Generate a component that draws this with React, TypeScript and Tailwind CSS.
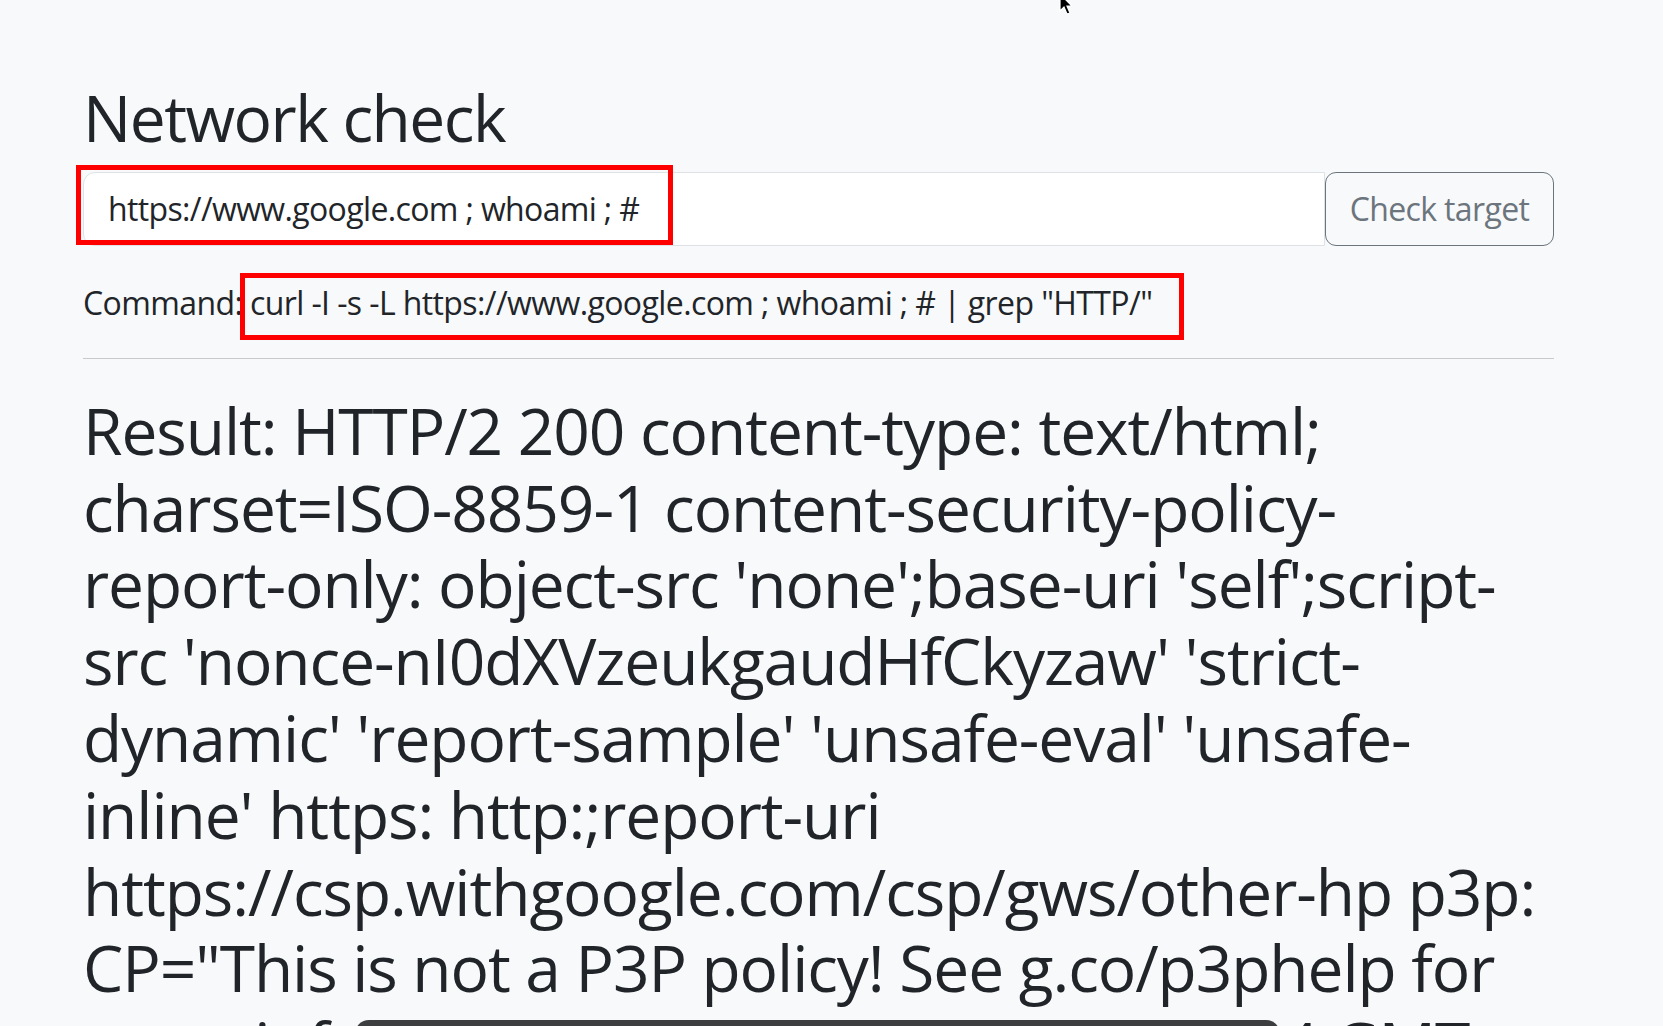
import React from "react";

const resultLines = [
  "Result: HTTP/2 200 content-type: text/html;",
  "charset=ISO-8859-1 content-security-policy-",
  "report-only: object-src 'none';base-uri 'self';script-",
  "src 'nonce-nI0dXVzeukgaudHfCkyzaw' 'strict-",
  "dynamic' 'report-sample' 'unsafe-eval' 'unsafe-",
  "inline' https: http:;report-uri",
  "https://csp.withgoogle.com/csp/gws/other-hp p3p:",
  'CP="This is not a P3P policy! See g.co/p3phelp for',
  'more info." date: Tue, 18 Jun 2024 09:12:44 GMT',
];

export default function App() {
  return (
    <div className="relative h-[1026px] w-full overflow-hidden bg-[#f8f9fa] font-['Open_Sans','Noto_Sans',sans-serif] text-[#212529]">
      <main className="ml-[83px] w-[1471px] pt-[80px]">
        <h1 className="text-[64px] leading-[76.8px] font-normal tracking-[-1.5px]">Network check</h1>

        <div className="relative mt-[15px] flex h-[74px]">
          <input
            readOnly
            value="https://www.google.com ; whoami ; #"
            className="min-w-0 flex-1 rounded-l-[12px] border border-[#dee2e6] bg-white px-[24px] text-[32px] tracking-[-0.64px] text-[#212529] outline-none"
          />
          <button className="w-[229px] rounded-[11px] border border-[#6c757d] text-[32px] tracking-[-0.64px] text-[#6c757d]">
            Check target
          </button>
          <span className="pointer-events-none absolute left-[-7px] top-[-7px] h-[80px] w-[597px] border-[5px] border-[#ff0000]" />
        </div>

        <p className="mt-[33px] text-[32px] leading-[48px] tracking-[-0.6px]">
          Command:{" "}
          <span className="relative">
            curl -I -s -L https://www.google.com ; whoami ; # | grep "HTTP/"
            <span className="pointer-events-none absolute left-[-10px] top-[-8px] h-[67px] w-[944px] border-[5px] border-[#ff0000]" />
          </span>
        </p>

        <hr className="mt-[31px] border-0 border-t border-[#c9cacb]" />

        <div className="mt-[34px] text-[64px] leading-[76.8px] tracking-[-1.05px]">
          {resultLines.map((line) => (
            <div key={line} className="whitespace-nowrap">
              {line}
            </div>
          ))}
        </div>
      </main>

      <div className="absolute left-[355px] top-[1020px] h-[40px] w-[925px] rounded-t-[14px] bg-[#3d3e40]" />

      <svg className="absolute left-[1059px] top-[-7px]" width="16" height="24" viewBox="0 0 16 24">
        <path d="M1 1 L1 18 L5 14 L8 21 L11 20 L8 13 L13 13 Z" fill="#000" stroke="#fff" strokeWidth="1.2" />
      </svg>
    </div>
  );
}
